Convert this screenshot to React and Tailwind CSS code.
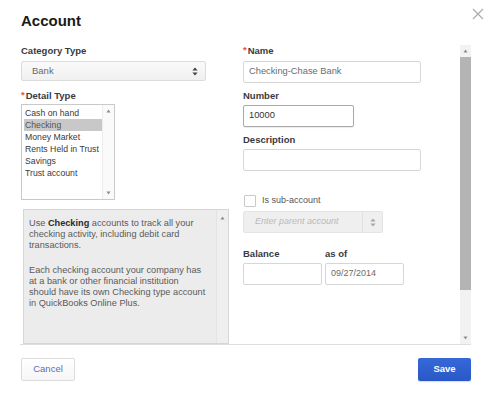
const font = { fontFamily: '"Liberation Sans", Arial, sans-serif' };

function Req() {
  return <span className="text-[#e4572e] mr-[1px] relative -top-[1px]">*</span>;
}

function Label({ children, required, className = '' }) {
  return (
    <div className={`text-[9.5px] leading-[12px] font-bold text-[#393a3d] ${className}`}>
      {required && <Req />}
      {children}
    </div>
  );
}

function UpDown({ className = '' }) {
  return (
    <svg className={className} width="6" height="9" viewBox="0 0 6 9">
      <path d="M3 0.5 L5.6 3.6 H0.4 Z" fill="currentColor" />
      <path d="M3 8.5 L5.6 5.4 H0.4 Z" fill="currentColor" />
    </svg>
  );
}

function Tri({ up }) {
  return (
    <svg width="5" height="4" viewBox="0 0 5 4" className="text-[#8a8a8a]">
      <path d={up ? 'M2.5 0.5 L4.5 3.5 H0.5 Z' : 'M2.5 3.5 L4.5 0.5 H0.5 Z'} fill="currentColor" />
    </svg>
  );
}

const details = ['Cash on hand', 'Checking', 'Money Market', 'Rents Held in Trust', 'Savings', 'Trust account'];

const helpLines = [
  'at a bank or other financial institution',
  'should have its own Checking type account',
  'in QuickBooks Online Plus.',
];

export default function App() {
  return (
    <div className="w-[491px] h-[400px] bg-white relative overflow-hidden" style={font}>
      {/* Header */}
      <div className="h-[42px] pl-[21px] pt-[12px]">
        <h2 className="text-[15px] leading-[18px] font-bold text-[#1a1a1a]">Account</h2>
      </div>
      <button className="absolute top-[7px] right-[6px] w-[14px] h-[14px] flex items-center justify-center text-[#a9a9a9]">
        <svg width="12" height="12" viewBox="0 0 12 12" fill="none" stroke="currentColor" strokeWidth="1.1">
          <path d="M1 1 L11 11 M11 1 L1 11" />
        </svg>
      </button>

      {/* Body */}
      <div className="ml-[20px] w-[451px] h-[303px] flex border-b border-[#dedede] overflow-hidden">
        <div className="flex-1 flex pt-[3px] pl-[1px] gap-[14px]">
          {/* Left column */}
          <div className="w-[208px] flex flex-col">
            <Label>Category Type</Label>
            <div className="mt-[4px] w-[185px] h-[21px] border border-[#dcdcdc] rounded-[2px] bg-gradient-to-b from-[#fafafa] to-[#f0f0f0] flex items-center pl-[10px] pr-[7px] text-[9.5px] text-[#6b6b6b]">
              <span className="flex-1">Bank</span>
              <UpDown className="text-[#444]" />
            </div>
            <Label required className="mt-[9px]">Detail Type</Label>
            <div className="mt-[2px] w-[94px] h-[100px] border border-[#c9c9c9] flex">
              <div className="flex-1 pt-[2px] pl-[2px]">
                {details.map((d) => (
                  <div
                    key={d}
                    className={`h-[12px] leading-[12px] text-[8.7px] pl-[1px] whitespace-nowrap ${d === 'Checking' ? 'bg-[#c8c8c8] text-[#555]' : 'text-[#3a3a3a]'}`}
                  >
                    {d}
                  </div>
                ))}
              </div>
              <div className="w-[12px] border-l border-[#ececec] bg-[#fafafa] flex flex-col items-center justify-between py-[4px]">
                <Tri up />
                <Tri />
              </div>
            </div>
            <div className="mt-[9px] ml-[2px] w-[206px] h-[140px] border border-[#d6d6d6] bg-[#ececec] flex">
              <div className="flex-1 pl-[5px] pt-[8px] text-[9.2px] leading-[11px] text-[#5a5a5a] whitespace-nowrap">
                <div>
                  Use <b className="text-[#2b2b2b]">Checking</b> accounts to track all your
                </div>
                <div>checking activity, including debit card</div>
                <div>transactions.</div>
                <div className="mt-[14px]">Each checking account your company has</div>
                {helpLines.map((l) => (
                  <div key={l}>{l}</div>
                ))}
              </div>
              <div className="w-[12px] bg-[#efefef] border-l border-[#e4e4e4] flex justify-center pt-[6px]">
                <Tri up />
              </div>
            </div>
          </div>

          {/* Right column */}
          <div className="w-[180px] flex flex-col">
            <Label required>Name</Label>
            <div className="mt-[4px] w-[178px] h-[22px] border border-[#d6d6d6] rounded-[2px] flex items-center pl-[5px] text-[9.3px] text-[#6b6b6b]">
              Checking-Chase Bank
            </div>
            <Label className="mt-[7px]">Number</Label>
            <div className="mt-[3px] w-[111px] h-[22px] border border-[#a9a9a9] rounded-[2px] flex items-center pl-[5px] text-[9.3px] text-[#333] shadow-[0_1px_1px_rgba(0,0,0,0.08)]">
              10000
            </div>
            <Label className="mt-[7px]">Description</Label>
            <div className="mt-[3px] w-[178px] h-[22px] border border-[#d6d6d6] rounded-[2px]" />

            <div className="mt-[24px] flex items-center h-[12px]">
              <div className="ml-[1px] w-[12px] h-[12px] border border-[#c9c9c9] rounded-[1px] bg-white" />
              <span className="ml-[6px] text-[9px] text-[#555]">Is sub-account</span>
            </div>
            <div className="mt-[4px] w-[140px] h-[22px] border border-[#e4e4e4] rounded-[2px] bg-[#efefef] flex items-center text-[9px]">
              <span className="flex-1 pl-[11px] italic text-[#b9b9b9]">Enter parent account</span>
              <div className="w-[20px] h-full border-l border-[#e0e0e0] flex items-center justify-center">
                <UpDown className="text-[#a8a8a8]" />
              </div>
            </div>

            <div className="mt-[15px] flex gap-[3px]">
              <div className="w-[79px]">
                <Label>Balance</Label>
                <div className="mt-[3px] w-[79px] h-[22px] border border-[#d6d6d6] rounded-[2px]" />
              </div>
              <div className="w-[79px]">
                <div className="text-[9.5px] leading-[12px] font-bold text-[#393a3d]">as of</div>
                <div className="mt-[3px] w-[79px] h-[22px] border border-[#d6d6d6] rounded-[2px] flex items-center pl-[5px] text-[9px] text-[#6b6b6b]">
                  09/27/2014
                </div>
              </div>
            </div>
          </div>
        </div>

        {/* Scrollbar */}
        <div className="w-[11px] mt-[3px] bg-[#f2f2f2] flex flex-col">
          <div className="h-[12px] flex items-center justify-center">
            <Tri up />
          </div>
          <div className="h-[233px] bg-[#b4b4b4]" />
          <div className="flex-1 flex items-end justify-center pb-[4px]">
            <Tri />
          </div>
        </div>
      </div>

      {/* Footer */}
      <div className="flex justify-between items-center px-[20px] pt-[13px]">
        <button className="ml-[1px] w-[54px] h-[23px] border border-[#dcdcdc] rounded-[2px] bg-gradient-to-b from-white to-[#f6f6f6] text-[9.5px] text-[#5c6fb3]">
          Cancel
        </button>
        <button className="w-[53px] h-[23px] rounded-[2px] bg-gradient-to-b from-[#3668d8] to-[#2a58c6] text-[9.5px] font-bold text-white shadow-[0_1px_1px_rgba(0,0,0,0.15)]">
          Save
        </button>
      </div>
    </div>
  );
}
